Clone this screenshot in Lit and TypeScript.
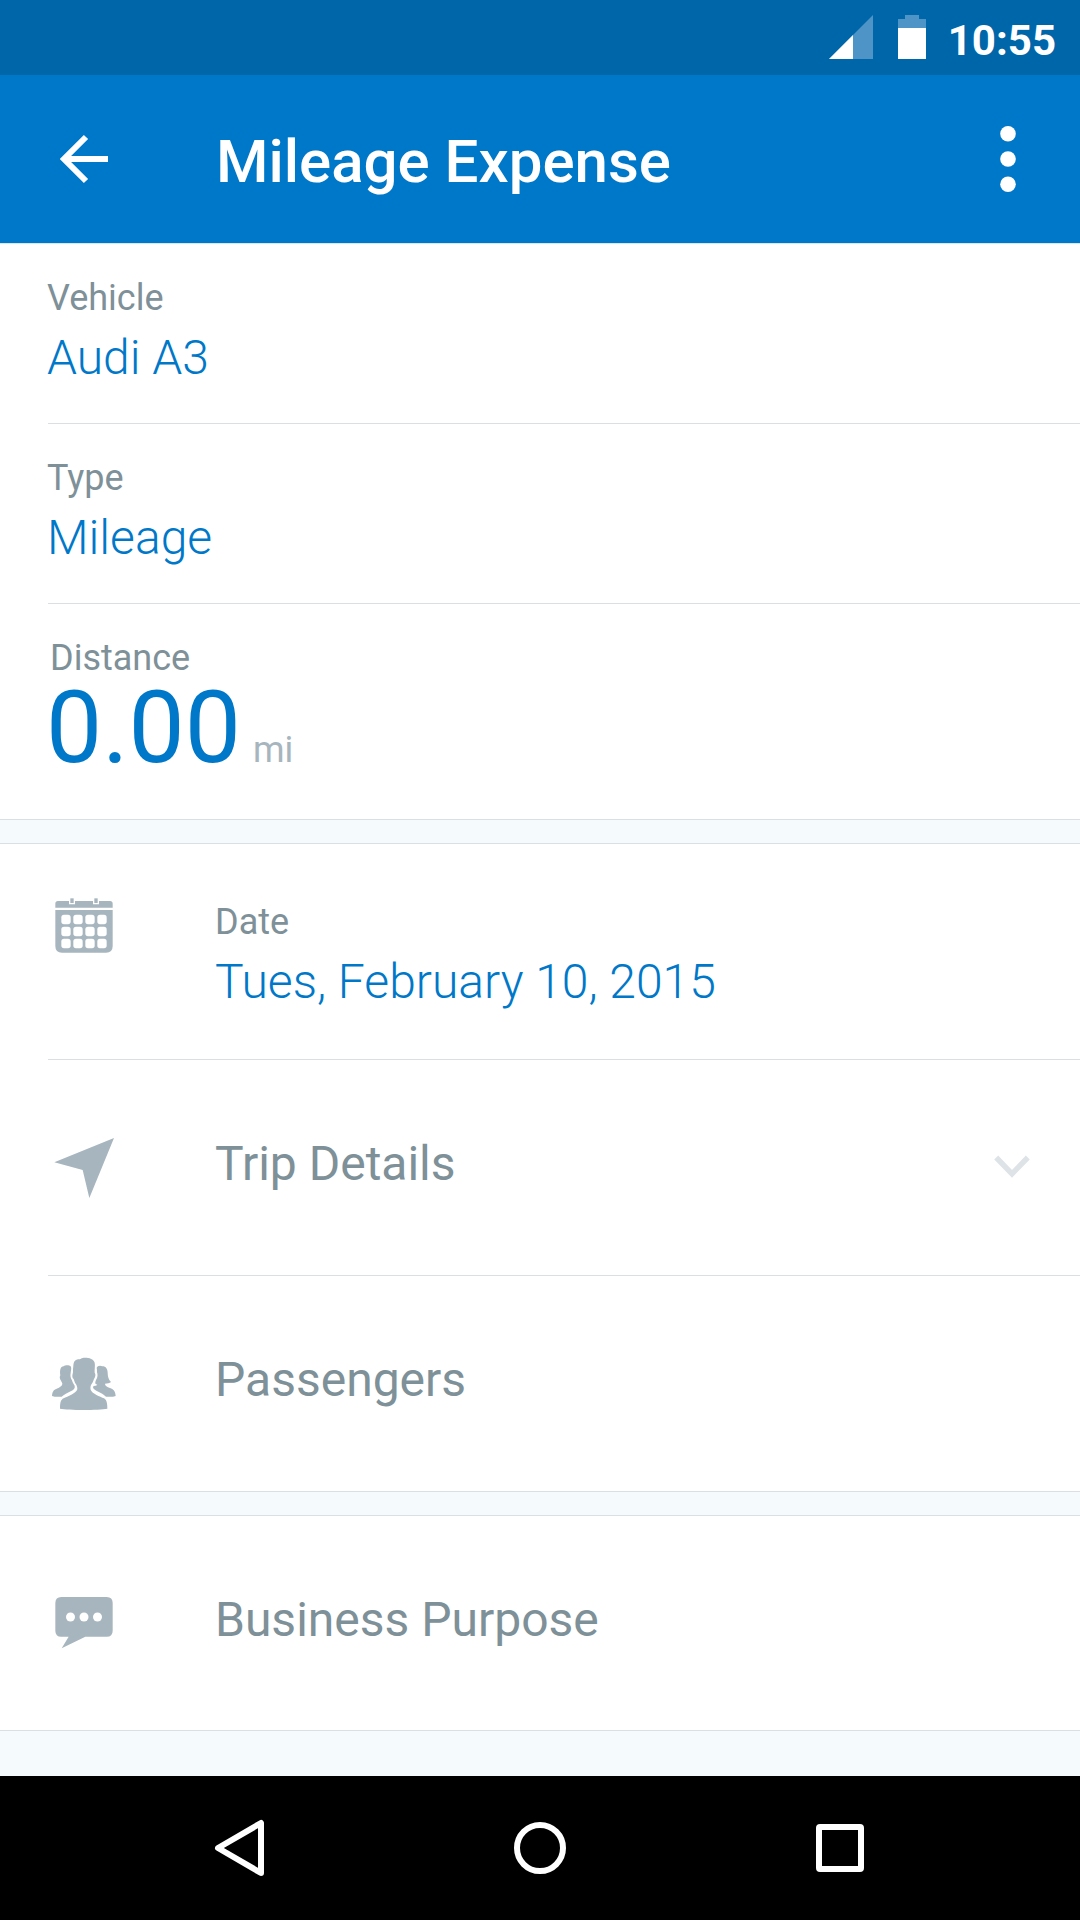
import { LitElement, html, css, svg } from "lit";
import { customElement, property } from "lit/decorators.js";

const calendarIcon = svg`<svg class="glyph" viewBox="54 27 216 216">
  <path fill-rule="evenodd" d="M84 63H117V73H135V63H189V73H207V63H240Q248 63 248 71V83H76V71Q76 63 84 63Z
    M76 90H248V198Q248 218 228 218H96Q76 218 76 198Z"/>
  <rect x="121" y="55" width="10" height="14"/><rect x="193" y="55" width="10" height="14"/>
  ${[104.5, 140.5, 176.5].map((y) => [94, 130, 166, 202].map((x) =>
    svg`<rect class="hole" x=${x} y=${y} width="28" height="28" rx="8"/>`))}
</svg>`;

const arrowIcon = svg`<svg class="glyph" viewBox="54 66 216 216">
  <path d="M73 157L252 84L178 264L158 180Z"/>
</svg>`;

const peopleIcon = svg`<svg class="glyph" viewBox="54 24 216 216">
  <path d="M90 206C90 189 92 179 101 175C113 169 137 162 142 148C142 142 141 138 138 133C135 129 133 123 131 117C127 114 126 108 128 101C130 98 128 90 130 78C131 65 134 60 145 58C152 58 154 53 165 53C178 53 191 57 194 68C196 76 193 90 194 98C198 102 196 112 192 117C190 124 187 130 183 135C181 140 181 145 182 149C187 162 210 169 222 175C230 180 232 190 232 206C205 211 116 211 90 206Z"/>
  <path d="M66 168C67 155 71 149 80 146C90 142 96 138 97 132C97 128 95 126 93 122C89 118 88 110 91 106C89 92 91 79 101 79C106 75 118 75 123 80C125 86 122 94 122 99C120 107 122 116 126 121C128 128 131 133 134 137C136 144 131 149 125 152C113 158 101 164 95 170C84 171 74 171 66 168Z"/>
  <path d="M257 168C256 153 250 147 240 144C231 141 225 137 225 131C232 131 239 130 243 126C236 119 233 109 233 98C232 83 225 79 217 79C211 75 202 77 200 83C202 90 200 95 202 100C204 108 201 117 198 120C196 125 195 129 197 132L202 134C198 139 190 136 189 141C189 147 197 151 202 154C212 159 222 164 228 170C240 171 249 171 257 168Z"/>
</svg>`;

const speechIcon = svg`<svg class="glyph" viewBox="54 24 216 216">
  <path d="M94 51H230Q248 51 248 69V152Q248 170 230 170H166L95 205L116 170H94Q76 170 76 152V69Q76 51 94 51Z"/>
  <circle class="hole" cx="121.500" cy="111" r="13.500"/><circle class="hole" cx="162" cy="111" r="13.500"/><circle class="hole" cx="202.500" cy="111" r="13.500"/>
</svg>`;

@customElement("detail-row")
class DetailRow extends LitElement {
  @property() label = "";
  @property() value = "";
  @property({ attribute: false }) icon: unknown = null;
  @property({ type: Boolean }) chevron = false;

  static styles = css`
    :host { display: block; padding-left: 48px; }
    .row { display: flex; box-sizing: border-box; height: 216px; align-items: flex-start; border-bottom: 1px solid #dcdfe2; }
    :host([last]) { padding-left: 0; }
    :host([last]) .row { padding-left: 48px; border-color: #d9dfe4; }
    :host([short]) .row { height: 215px; }
    .icon { display: flex; flex: 0 0 167px; padding-top: 72px; }
    .glyph { width: 72px; height: 72px; fill: #a7b5be; }
    .hole { fill: #fff; }
    .field .icon { padding-top: 45px; }
    .stack { display: flex; flex-direction: column; gap: 10px; padding-top: 57px; }
    .label { font-size: 36px; line-height: 42px; color: #7e9098; }
    .value { font-size: 48px; line-height: 57px; font-weight: 300; color: #0078c9; }
    .heading { flex: 1; font-size: 48px; line-height: 57px; padding-top: 75px; color: #7e9098; }
    .chevron { width: 36px; height: 24px; margin: 95px 50px 0 0; fill: none; stroke: #dde3e7; stroke-width: 5.500; }
  `;

  render() {
    return this.value
      ? html`<div class="row field">
          <div class="icon">${this.icon}</div>
          <div class="stack"><div class="label">${this.label}</div><div class="value">${this.value}</div></div>
        </div>`
      : html`<div class="row">
          <div class="icon">${this.icon}</div>
          <div class="heading">${this.label}</div>
          ${this.chevron ? html`<svg class="chevron" viewBox="994.500 1155 36 24"><path d="M996.700 1157.500L1012.500 1173.800L1028.300 1157.500"/></svg>` : null}
        </div>`;
  }
}

@customElement("app-root")
class AppRoot extends LitElement {
  static styles = css`
    :host { display: flex; flex-direction: column; width: 1080px; height: 1920px; overflow: hidden; background: #f5fafd; font-family: Roboto, "Liberation Sans", sans-serif; }
    .status { display: flex; box-sizing: border-box; height: 75px; justify-content: flex-end; padding: 15px 24px 0 0; background: #0066aa; }
    .signal { width: 44px; height: 44px; margin-right: 25px; }
    .battery { width: 28px; height: 44px; margin-right: 22px; }
    .faint { fill: #4f94c6; }
    .solid { fill: #fff; }
    .time { font-size: 42px; line-height: 51px; font-weight: 700; color: #fff; }
    .bar { display: flex; box-sizing: border-box; height: 168px; align-items: center; padding: 0 48px; background: #0078c9; }
    .back { width: 72px; height: 72px; fill: none; stroke: #fff; stroke-width: 6; }
    .title { flex: 1; padding-left: 96px; margin-top: 5px; font-size: 60px; line-height: 71px; font-weight: 500; color: #fff; }
    .more { width: 48px; height: 72px; fill: #fff; }
    .section { border-top: 1px solid #d9dfe4; background: #fff; }
    .section.top { border-top-color: #d8e8f3; }
    .section + .section { margin-top: 23px; }
    .field { box-sizing: border-box; height: 180px; margin-left: 48px; padding-top: 33px; border-bottom: 1px solid #dcdfe2; }
    .label, .value { margin-left: -1px; }
    .label { font-size: 36px; line-height: 42px; color: #7e9098; }
    .value { margin-top: 10px; font-size: 48px; line-height: 57px; font-weight: 300; color: #0078c9; }
    .distance { box-sizing: border-box; height: 216px; padding: 33px 0 0 46px; border-bottom: 1px solid #d9dfe4; }
    .distance .label { margin-left: 4px; }
    .amount { display: flex; align-items: baseline; gap: 12px; }
    .number { font-size: 100px; line-height: 97px; color: #0078c9; }
    .unit { font-size: 36px; line-height: 42px; color: #a7b5be; }
    .nav { display: flex; height: 144px; margin-top: auto; background: #000; justify-content: center; align-items: center; gap: 228px; }
    .key { width: 72px; height: 72px; fill: none; stroke: #fff; stroke-width: 6; stroke-linejoin: round; }
  `;

  render() {
    return html`
      <div class="status">
        <svg class="signal" viewBox="0 0 44 44"><path class="faint" d="M0 44L44 0V44Z"/><path class="solid" d="M0 44L24 20V44Z"/></svg>
        <svg class="battery" viewBox="0 0 28 44"><path class="faint" d="M7 0H21V4H28V13H0V4H7Z"/><path class="solid" d="M0 13H28V44H0Z"/></svg>
        <div class="time">10:55</div>
      </div>
      <div class="bar">
        <svg class="back" viewBox="48 123 72 72"><path d="M108 159H64M86 137L64 159L86 181"/></svg>
        <div class="title">Mileage Expense</div>
        <svg class="more" viewBox="984 123 48 72"><circle cx="1008" cy="133.700" r="7.800"/><circle cx="1008" cy="159" r="7.800"/><circle cx="1008" cy="184.300" r="7.800"/></svg>
      </div>
      <div class="section top">
        <div class="field"><div class="label">Vehicle</div><div class="value">Audi A3</div></div>
        <div class="field"><div class="label">Type</div><div class="value">Mileage</div></div>
        <div class="distance">
          <div class="label">Distance</div>
          <div class="amount"><span class="number">0.00</span><span class="unit">mi</span></div>
        </div>
      </div>
      <div class="section">
        <detail-row label="Date" value="Tues, February 10, 2015" .icon=${calendarIcon}></detail-row>
        <detail-row label="Trip Details" chevron .icon=${arrowIcon}></detail-row>
        <detail-row label="Passengers" last .icon=${peopleIcon}></detail-row>
      </div>
      <div class="section">
        <detail-row label="Business Purpose" last short .icon=${speechIcon}></detail-row>
      </div>
      <div class="nav">
        <svg class="key" viewBox="204 1812 72 72"><path d="M261 1823V1873L218 1848Z"/></svg>
        <svg class="key" viewBox="504 1812 72 72"><circle cx="540" cy="1848" r="23"/></svg>
        <svg class="key" viewBox="804 1812 72 72"><rect x="819" y="1827" width="42" height="42" rx="1"/></svg>
      </div>
    `;
  }
}
